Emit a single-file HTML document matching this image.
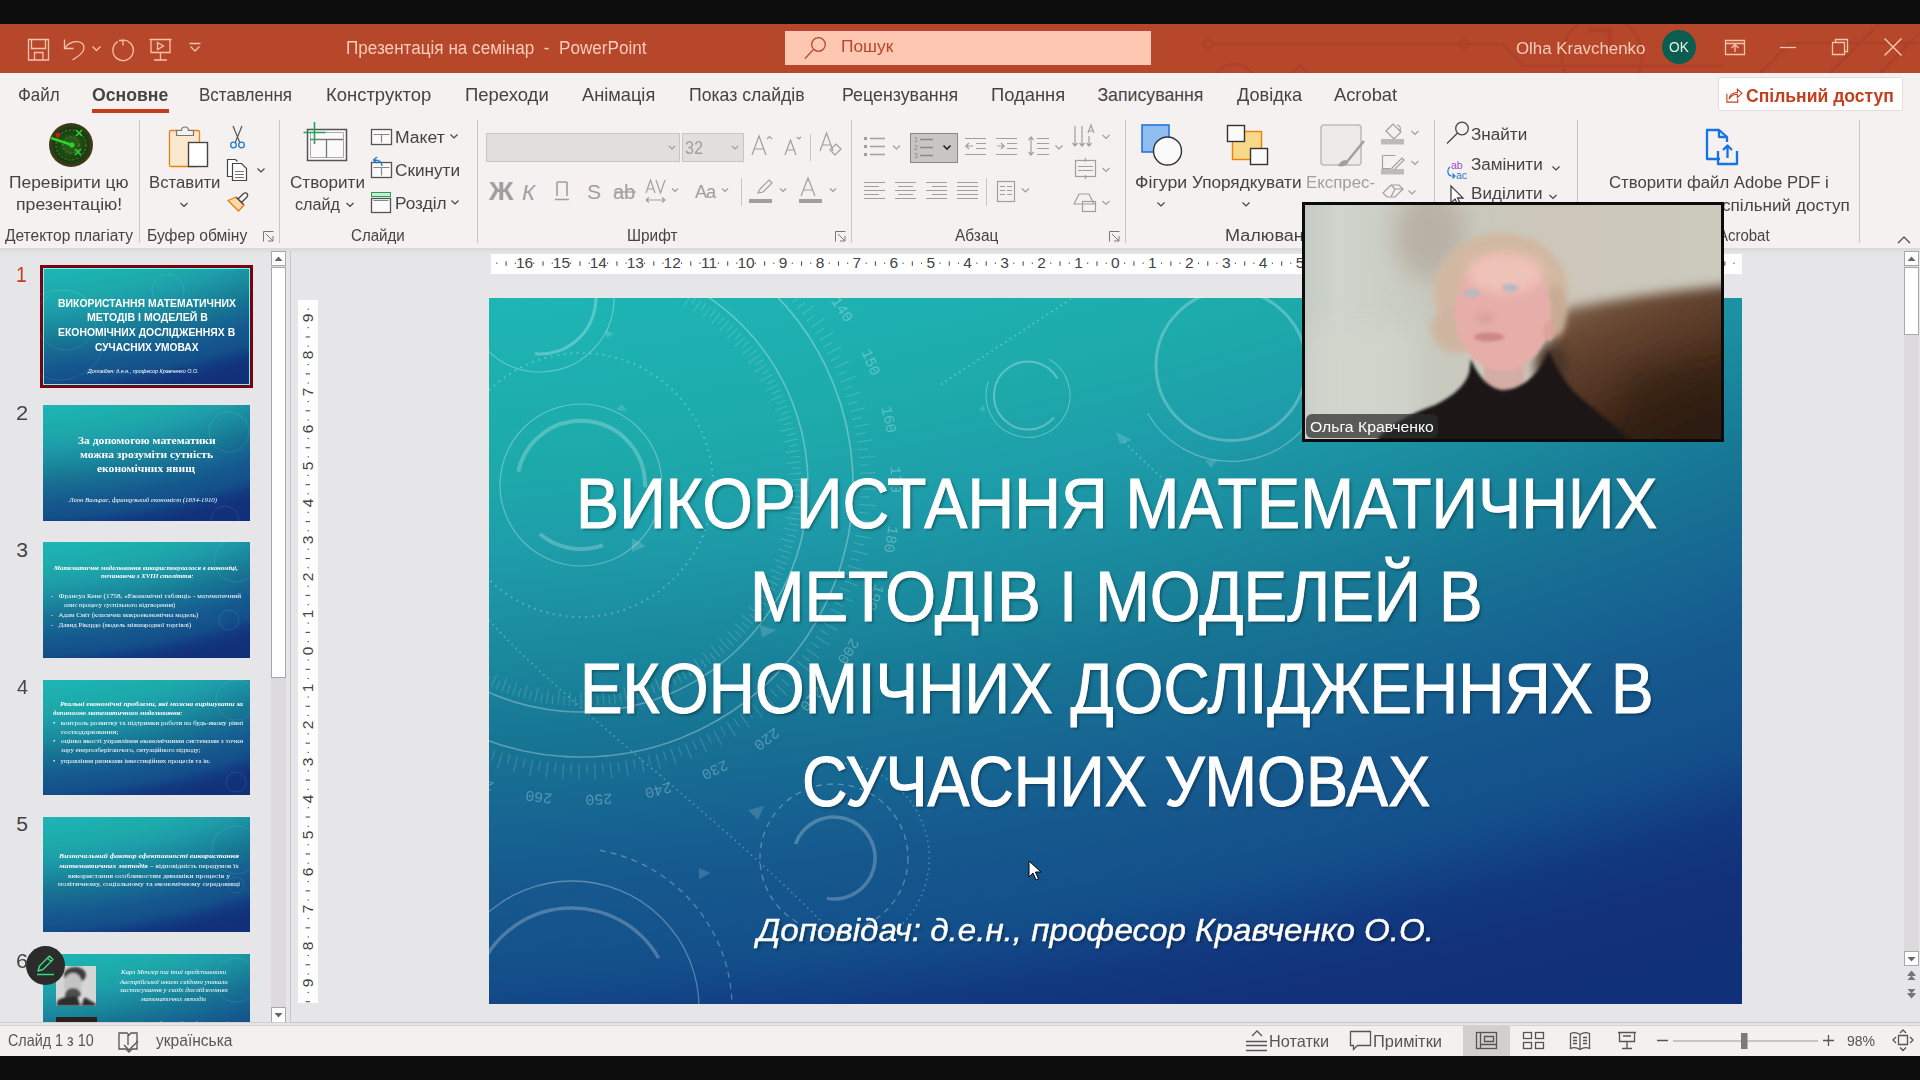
<!DOCTYPE html>
<html><head><meta charset="utf-8">
<style>
*{margin:0;padding:0;box-sizing:border-box}
html,body{width:1920px;height:1080px;overflow:hidden;background:#0c0c0c}
body{position:relative;font-family:"Liberation Sans",sans-serif}
.a{position:absolute}
.t{position:absolute;white-space:nowrap;line-height:1;transform-origin:0 0}
svg{position:absolute;overflow:visible}
</style></head><body>
<div class="a" style="left:0;top:24px;width:1920px;height:49px;background:#b7472a"></div>
<div class="a" style="left:0;top:73px;width:1920px;height:175px;background:#f4f1f0"></div>
<div class="a" style="left:0;top:248px;width:1920px;height:777px;background:#e6e6e8"></div>
<div class="a" style="left:0;top:1025px;width:1920px;height:31px;background:#f3f1f0;border-top:1px solid #d4d2d0"></div>

<svg class="a" style="left:0;top:24px;overflow:hidden" width="1920" height="49" viewBox="0 24 1920 49">
 <g fill="none" stroke="#a63e25" stroke-width="3" opacity="0.55">
  <line x1="1212" y1="44" x2="1460" y2="44"/>
  <circle cx="1208" cy="44" r="4"/><circle cx="1464" cy="44" r="4"/>
  <circle cx="1234" cy="86" r="22"/>
  <path d="M1292 73 l8 -8 l8 8"/>
  <circle cx="1602" cy="56" r="40"/>
  <path d="M1588 30 h22 v22" stroke-width="5"/>
  <path d="M1462 44 h40 l22 22 h200"/>
  <path d="M1760 73 l30 -30 h130"/>
  <path d="M1830 73 l49 -49"/>
  <path d="M1880 73 l40 -40"/>
 </g>
</svg>
<svg class="a" style="left:0;top:24px" width="220" height="49" viewBox="0 24 220 49">
 <g fill="none" stroke="#f6c3ad" stroke-width="1.3">
  <path d="M28.5 39.5 h20 v20.5 h-20 z"/>
  <path d="M31.5 39.5 v9 h14 v-9"/>
  <path d="M34.5 60 v-7.5 h8.5 v7.5"/>
  <path d="M64.5 39.5 v9 h9"/>
  <path d="M65 48 C70 40 84 39 84 48 C84 52 80 55 72.5 60"/>
  <path d="M92.5 46.5 l4 4 l4 -4"/>
  <path d="M122 40.2 A10.2 10.2 0 1 1 118 41.5"/>
  <path d="M119 40.5 h4 v5"/>
  <path d="M149.5 39.5 h22 M151 39.5 v13 h19 v-13 M160.5 52.5 v7.5 M154 60 h13"/>
  <path d="M157.5 42.5 l6 3.5 l-6 3.5 z"/>
  <path d="M189.5 43.5 h11 M190.5 46.5 l4.5 4.5 l4.5 -4.5"/>
 </g>
</svg>
<div class="a" style="left:785px;top:31px;width:366px;height:34px;background:#fdc7b2"></div>
<svg class="a" style="left:800px;top:34px" width="30" height="30" viewBox="0 0 30 30">
 <g fill="none" stroke="#b7472a" stroke-width="1.3"><circle cx="18.5" cy="10.5" r="6.8"/><path d="M13.6 15.4 L5 24.5"/></g>
</svg>
<div class="a" style="left:1662px;top:30px;width:34px;height:34px;border-radius:50%;background:#0b5d4f"></div>
<svg class="a" style="left:1700px;top:24px" width="220" height="49" viewBox="1700 24 220 49">
 <g fill="none" stroke="#f6c3ad" stroke-width="1.3">
  <path d="M1725.5 40.5 h19 v14 h-19 z M1725.5 43.5 h19"/>
  <path d="M1735 52 v-7 M1731.5 48 l3.5 -3.5 l3.5 3.5"/>
  <path d="M1780 47.5 h16"/>
  <path d="M1832.5 42.5 h12 v12 h-12 z M1835.5 42.5 v-3 h12 v12 h-3"/>
  <path d="M1884.5 38.5 l17 17 M1901.5 38.5 l-17 17" stroke-width="1.5"/>
 </g>
</svg>

<div class="t" style="left:345.61px;top:38px;font-size:19.19px;color:#f9cdb9;transform:scaleX(0.8921);white-space:pre">Презентація на семінар  -  PowerPoint</div>
<div class="t" style="left:840.59px;top:39px;font-size:16.72px;color:#b7472a;transform:scaleX(1.0385)">Пошук</div>
<div class="t" style="left:1516.21px;top:40px;font-size:16.35px;color:#f9cdb9;transform:scaleX(1.0324)">Olha Kravchenko</div>
<div class="t" style="left:1669.36px;top:39px;font-size:15.26px;color:#e9f0ea;transform:scaleX(0.8982)">OK</div>
<div class="t" style="left:18.02px;top:87px;font-size:17.73px;color:#444;transform:scaleX(0.9556)">Файл</div>
<div class="t" style="left:199.10px;top:87px;font-size:17.73px;color:#444;transform:scaleX(0.9608)">Вставлення</div>
<div class="t" style="left:326.49px;top:87px;font-size:17.73px;color:#444;transform:scaleX(1.0413)">Конструктор</div>
<div class="t" style="left:464.50px;top:87px;font-size:17.73px;color:#444;transform:scaleX(1.0429)">Переходи</div>
<div class="t" style="left:581.96px;top:87px;font-size:17.73px;color:#444;transform:scaleX(1.0279)">Анімація</div>
<div class="t" style="left:689.07px;top:87px;font-size:17.73px;color:#444;transform:scaleX(0.9959)">Показ слайдів</div>
<div class="t" style="left:842.04px;top:87px;font-size:17.73px;color:#444;transform:scaleX(1.0053)">Рецензування</div>
<div class="t" style="left:991.01px;top:87px;font-size:17.73px;color:#444;transform:scaleX(1.0371)">Подання</div>
<div class="t" style="left:1097.42px;top:87px;font-size:17.73px;color:#444">Записування</div>
<div class="t" style="left:1236.87px;top:87px;font-size:17.73px;color:#444;transform:scaleX(1.0211)">Довідка</div>
<div class="t" style="left:1333.96px;top:87px;font-size:17.73px;color:#444;transform:scaleX(1.0337)">Acrobat</div>
<div class="t" style="left:91.78px;top:87px;font-size:17.73px;color:#444;font-weight:bold;transform:scaleX(0.9954)">Основне</div>
<div class="a" style="left:92px;top:108.5px;width:77px;height:4px;background:#c43e1c"></div>
<div class="a" style="left:1718px;top:77px;width:185px;height:34px;background:#fff;border:1px solid #e1dfdd;border-radius:2px"></div>
<svg class="a" style="left:1724px;top:85px" width="20" height="20" viewBox="0 0 24 22">
 <g fill="none" stroke="#c43e1c" stroke-width="1.3">
  <path d="M3.5 9.5 v10 h13 v-4"/>
  <path d="M6 16 C7 10 11 8 16 8 v-4 l5.5 5 l-5.5 5 v-4 C12 10 8 12 6 16 z"/>
 </g>
</svg>

<div class="t" style="left:1746.28px;top:88px;font-size:17.44px;color:#c43e1c;font-weight:bold;transform:scaleX(1.0063)">Спільний доступ</div>
<svg class="a" style="left:0;top:73px" width="1920" height="175" viewBox="0 73 1920 175">
<defs>
 <radialGradient id="rad" cx="0.5" cy="0.5" r="0.5">
  <stop offset="0" stop-color="#2f6a1e"/><stop offset="0.75" stop-color="#123d10"/><stop offset="1" stop-color="#4a3a1c"/>
 </radialGradient>
</defs>
<g stroke="#c8c6c4" stroke-width="1">
 <line x1="139.5" y1="120" x2="139.5" y2="243"/><line x1="279.5" y1="120" x2="279.5" y2="243"/>
 <line x1="477.5" y1="120" x2="477.5" y2="243"/><line x1="851.5" y1="120" x2="851.5" y2="243"/>
 <line x1="1125.5" y1="120" x2="1125.5" y2="243"/><line x1="1434.5" y1="120" x2="1434.5" y2="243"/>
 <line x1="1577.5" y1="120" x2="1577.5" y2="243"/><line x1="1859.5" y1="120" x2="1859.5" y2="243"/>
 <line x1="810.5" y1="134" x2="810.5" y2="161"/><line x1="741.5" y1="178" x2="741.5" y2="206"/>
 <line x1="986.5" y1="178" x2="986.5" y2="206"/>
</g>
<!-- radar -->
<circle cx="71" cy="145" r="22" fill="url(#rad)"/>
<g fill="none" stroke="#b08a2a" stroke-width="1" stroke-dasharray="2 2" opacity="0.8">
 <circle cx="71" cy="145" r="15"/><circle cx="71" cy="145" r="8"/>
</g>
<path d="M51 138 L72 145" stroke="#2bd62b" stroke-width="2.5"/>
<circle cx="72" cy="145" r="2.5" fill="#2bd62b"/>
<circle cx="58" cy="135" r="2.5" fill="#c0201a"/>
<path d="M76 130 l6 6 M82 130 l-6 6 M75 149 l6 6 M81 149 l-6 6" stroke="#2bd62b" stroke-width="1.5"/>
<!-- clipboard -->
<rect x="169.5" y="130.5" width="30" height="36" rx="1.5" fill="#fbe9cf" stroke="#e8820c" stroke-width="1.3"/>
<path d="M176.5 135.5 v-5 h5 a3.5 3.5 0 0 1 7 0 h5 v5 z" fill="#f3f2f1" stroke="#777" stroke-width="1.2"/>
<rect x="188.5" y="142.5" width="19" height="24" fill="#fff" stroke="#444" stroke-width="1.4"/>
<g fill="none" stroke="#444" stroke-width="1.2">
 <path d="M180.5 203 l3.5 3.5 l3.5 -3.5 M346.5 203 l3.5 3.5 l3.5 -3.5 M1157.5 202.5 l3.5 3.5 l3.5 -3.5 M1242.5 202.5 l3.5 3.5 l3.5 -3.5"/>
 <path d="M257.5 168.5 l3.5 3.5 l3.5 -3.5 M450.5 134.5 l3.5 3.5 l3.5 -3.5 M451.5 200.5 l3.5 3.5 l3.5 -3.5"/>
 <path d="M1552.5 166.5 l3.5 3.5 l3.5 -3.5 M1549.5 195 l3.5 3.5 l3.5 -3.5"/>
</g>
<!-- scissors -->
<path d="M233 126 L240 143 M242 126 L235 143" stroke="#555" stroke-width="1.2" fill="none"/>
<circle cx="233.5" cy="145" r="2.8" fill="none" stroke="#1e7bd3" stroke-width="1.3"/>
<circle cx="241.5" cy="145" r="2.8" fill="none" stroke="#1e7bd3" stroke-width="1.3"/>
<!-- copy -->
<path d="M232.5 176.5 h-5 v-17 h8 l2 2" fill="#fff" stroke="#444" stroke-width="1.2"/>
<path d="M232.5 163.5 h9 l5 5 v12 h-14 z" fill="#fff" stroke="#444" stroke-width="1.2"/>
<path d="M235 171.5 h9 M235 174.5 h9 M235 177.5 h9" stroke="#777" stroke-width="1"/>
<!-- format painter -->
<path d="M228 200.5 L236 197 L244 205 L238.5 211 Z" fill="#fbd8a8" stroke="#e8820c" stroke-width="1.3" stroke-linejoin="round"/>
<path d="M236.5 197.5 L243.5 204.5 M238 199 L243 194 C244 192.5 246 192.5 247 193.5 C248 194.5 248 196.5 246.5 197.5 L241.5 202.5" fill="none" stroke="#444" stroke-width="1.3" stroke-linejoin="round"/>
<!-- launcher icons -->
<g fill="none" stroke="#777" stroke-width="1">
 <path d="M263.5 241.5 v-10 h10 M266 234 l7 7 M273 236 v5 h-5"/>
 <path d="M835.5 241.5 v-10 h10 M838 234 l7 7 M845 236 v5 h-5"/>
 <path d="M1109.5 241.5 v-10 h10 M1112 234 l7 7 M1119 236 v5 h-5"/>
</g>
<!-- new slide -->
<path d="M307.5 129.5 h39 v31 h-39 z" fill="#fafafa" stroke="#555" stroke-width="1.5"/>
<path d="M310.5 132.5 h33 v25 h-33 z" fill="none" stroke="#aaa" stroke-width="1"/>
<path d="M310 139.5 h33 M326.5 139.5 v18" stroke="#777" stroke-width="1.3"/>
<path d="M303.5 132.5 h22 M314.5 122 v22" stroke="#21a35a" stroke-width="1.6"/>
<!-- layout -->
<rect x="371.5" y="129.5" width="20" height="15" fill="#fafafa" stroke="#555" stroke-width="1.3"/>
<path d="M373.5 134.5 h16 M381.5 134.5 v8" stroke="#888" stroke-width="1.2"/>
<rect x="371.5" y="162.5" width="20" height="15" fill="#fafafa" stroke="#555" stroke-width="1.3"/>
<path d="M373.5 167.5 h16 M381.5 167.5 v8" stroke="#888" stroke-width="1.2"/>
<path d="M382 166 c0 -4 -3 -6 -8 -6 M377 157 l-3.5 3 l3.5 3" fill="none" stroke="#1e7bd3" stroke-width="1.3"/>
<rect x="371.5" y="192.5" width="19" height="4" fill="#c9ebd5" stroke="#21a35a" stroke-width="1"/>
<rect x="371.5" y="198.5" width="19" height="14" fill="#fafafa" stroke="#555" stroke-width="1.3"/>
<path d="M373.5 200.5 h15" stroke="#888"/>
<!-- font boxes -->
<rect x="486.5" y="133.5" width="193" height="28" fill="#e1dfdd" stroke="#c8c6c4"/>
<rect x="682.5" y="133.5" width="61" height="28" fill="#e1dfdd" stroke="#c8c6c4"/>
<g fill="none" stroke="#a19f9d" stroke-width="1.2">
 <path d="M669 146 l3 3 l3 -3 M732 146 l3 3 l3 -3"/>
 <path d="M672 188.5 l3 3 l3 -3 M722 188.5 l3 3 l3 -3 M780 188.5 l3 3 l3 -3 M830 188.5 l3 3 l3 -3"/>
 <path d="M893 145.5 l3.5 3.5 l3.5 -3.5 M1055.5 145.5 l3.5 3.5 l3.5 -3.5 M1022 188.5 l3.5 3.5 l3.5 -3.5"/>
 <path d="M1102.5 135 l3.5 3.5 l3.5 -3.5 M1102.5 168 l3.5 3.5 l3.5 -3.5 M1102.5 201 l3.5 3.5 l3.5 -3.5"/>
 <path d="M1411.5 131 l3.5 3.5 l3.5 -3.5 M1411.5 161 l3.5 3.5 l3.5 -3.5 M1408.5 190.5 l3.5 3.5 l3.5 -3.5"/>
 <!-- A^ A v -->
 <path d="M752 155 l7 -19 l7 19 M754.5 149 h9 M767 139 l2.5 -2.5 l2.5 2.5"/>
 <path d="M785 155 l5.5 -15 l5.5 15 M787 150 h7 M797 137 l2 2 l2 -2"/>
 <path d="M820 151 l6.5 -18 l6.5 18 M822.5 145 h8"/>
 <path d="M830 150 l6 -6 l5 5 l-6 6 z" />
 <!-- bullets -->
 <path d="M870 138.5 h15 M870 146.5 h15 M870 154.5 h15" stroke-width="1.5"/>
 <path d="M965 138.5 h21 M976 143.5 h10 M976 148.5 h10 M965 154.5 h21 M973 146 h-7 l3 -3 M966 146 l3 3"/>
 <path d="M996 138.5 h21 M1007 143.5 h10 M1007 148.5 h10 M996 154.5 h21 M997 146 h7 l-3 -3 M1004 146 l-3 3"/>
 <path d="M1037 138.5 h12 M1037 143.5 h12 M1037 148.5 h12 M1037 154.5 h12 M1031 137 v18 M1028.5 140 l2.5 -3 l2.5 3 M1028.5 152 l2.5 3 l2.5 -3"/>
 <!-- align rows -->
 <path d="M864 182.5 h21 M864 186.5 h15 M864 190.5 h21 M864 194.5 h15 M864 198.5 h21"/>
 <path d="M895 182.5 h21 M898 186.5 h15 M895 190.5 h21 M898 194.5 h15 M895 198.5 h21"/>
 <path d="M926 182.5 h21 M932 186.5 h15 M926 190.5 h21 M932 194.5 h15 M926 198.5 h21"/>
 <path d="M957 182.5 h21 M957 186.5 h21 M957 190.5 h21 M957 194.5 h21 M957 198.5 h21"/>
 <rect x="997.5" y="181.5" width="17" height="20"/>
 <path d="M1000 186.5 h5 M1007 186.5 h5 M1000 190.5 h5 M1007 190.5 h5 M1000 194.5 h5 M1007 194.5 h5"/>
 <!-- text direction, align, smartart -->
 <path d="M1075 126 v20 M1082 126 v20 M1089 136 v10 M1072.5 143 l2.5 3 l2.5 -3 M1079.5 143 l2.5 3 l2.5 -3 M1086.5 143 l2.5 3 l2.5 -3 M1088 133 l3 -8 l3 8 M1089 131 h4"/>
 <rect x="1075.5" y="160.5" width="20" height="16"/>
 <path d="M1078 166.5 h15 M1078 170.5 h15 M1085.5 158 v4 M1085.5 175 v4"/>
 <path d="M1074 204 l5 -10 h10 l5 10 z"/>
 <rect x="1082.5" y="201.5" width="13" height="10"/>
 <!-- font row 2 -->
 <path d="M555 199.5 h14 M557 182 v14 M567 182 v14 M557 182 h10" stroke-width="1.6"/>
 <path d="M614 192 h22" stroke-width="1.2"/>
 <path d="M646 193 l4.5 -13 l4.5 13 M647.5 189 h6 M656 180 l4.5 13 l4.5 -13 M646 200 h19 M646 200 l3 -2.5 M646 200 l3 2.5 M665 200 l-3 -2.5 M665 200 l-3 2.5"/>
 
 <path d="M760 189 l9 -9 l3 3 l-9 9 l-5 1 z"/>
 <path d="M801 196 l7 -18 l7 18 M803.5 190 h9"/>
 <!-- select -->
</g>
<g fill="#a19f9d">
 <rect x="749" y="199" width="23" height="4"/><rect x="799" y="199" width="23" height="4"/>
 <rect x="864" y="137" width="3" height="3"/><rect x="864" y="145" width="3" height="3"/><rect x="864" y="153" width="3" height="3"/>
</g>
<text x="489" y="200" font-family="Liberation Sans" font-weight="bold" font-size="25" fill="#a19f9d" transform="translate(489 0) scale(1.08 1) translate(-489 0)">Ж</text>
<text x="522" y="200" font-family="Liberation Sans" font-style="italic" font-size="22" fill="#a19f9d">К</text>
<text x="587" y="199" font-family="Liberation Sans" font-size="21" fill="#a19f9d">S</text>
<text x="613" y="199" font-family="Liberation Sans" font-size="20" fill="#a19f9d">ab</text>
<text x="695" y="198" font-family="Liberation Sans" font-size="18" fill="#a19f9d" textLength="21">Aa</text>
<!-- numbering box -->
<rect x="910.5" y="133.5" width="47" height="29" fill="#c8c6c4" stroke="#8a8886"/>
<path d="M920 139.5 h13 M920 147.5 h13 M920 155.5 h13" stroke="#8a8886" stroke-width="1.5"/>
<text x="914" y="142" font-family="Liberation Sans" font-size="7" fill="#8a8886">1</text>
<text x="914" y="150" font-family="Liberation Sans" font-size="7" fill="#8a8886">2</text>
<text x="914" y="158" font-family="Liberation Sans" font-size="7" fill="#8a8886">3</text>
<path d="M943.5 145.5 l3.5 3.5 l3.5 -3.5" fill="none" stroke="#222" stroke-width="1.6"/>
<!-- shapes -->
<rect x="1142" y="125" width="27" height="27" fill="#8fbdf0" stroke="#1e6fd9" stroke-width="1.5"/>
<circle cx="1167.5" cy="151" r="14" fill="#fafafa" stroke="#333" stroke-width="1.4"/>
<!-- arrange -->
<rect x="1232.5" y="131.5" width="29" height="28" fill="#f8d98a" stroke="#e8820c" stroke-width="1.4"/>
<rect x="1227.5" y="125.5" width="17" height="16" fill="#fafafa" stroke="#333" stroke-width="1.4"/>
<rect x="1250.5" y="148.5" width="17" height="16" fill="#fafafa" stroke="#333" stroke-width="1.4"/>
<!-- express -->
<rect x="1321" y="125" width="40" height="40" rx="3" fill="#ecebea" stroke="#bdbbb9" stroke-width="1.5"/>
<path d="M1364 141 l-18 22" stroke="#a19f9d" stroke-width="2.5"/>
<path d="M1346 160 c-4 0 -7 3 -8 6 c4 1 8 0 10 -3 z" fill="#a19f9d"/>
<!-- fill, outline, effects -->
<g fill="none" stroke="#a19f9d" stroke-width="1.2">
 <path d="M1386 131 l7 -7 l8 8 l-7 7 z M1397 125 c3 0 4 3 3 6"/>
 <path d="M1382.5 155.5 h13 M1382.5 155.5 v13 h8 M1392 168 l10 -10 l2 2 l-10 10 l-3 1 z"/>
 <path d="M1383 193 l8 -8 h8 l4 4 l-8 8 h-8 z M1391 185 l4 4 l8 0 M1395 189 l-4 8"/>
</g>
<g fill="#bdbbb9"><rect x="1381" y="139" width="23" height="5.5"/><rect x="1381" y="169" width="23" height="5.5"/></g>
<!-- find replace select -->
<g fill="none" stroke="#444" stroke-width="1.3">
 <circle cx="1462" cy="128.5" r="6.3"/><path d="M1457.5 133 L1447 143.5"/>
 <path d="M1451 186 v17 l4 -4 l3 6 l2.5 -1 l-3 -6 h5.5 z" fill="#fff"/>
</g>
<text x="1451" y="169" font-family="Liberation Sans" font-size="10.5" fill="#9b4fc2">ab</text>
<text x="1456" y="179" font-family="Liberation Sans" font-size="10.5" fill="#1e7bd3">ac</text>
<path d="M1450 167 c-3 2 -3 8 1 9 h4 M1452.5 173.5 l2.5 2.5 l-2.5 2.5" fill="none" stroke="#1e7bd3" stroke-width="1.1"/>
<!-- adobe -->
<g fill="none" stroke="#1473e6" stroke-width="2.3" stroke-linejoin="round">
 <path d="M1720 159 h-13 v-29 h12 l8 7 v5"/>
 <path d="M1719 130 v7 h8"/>
 <path d="M1718 151 v13 h19 v-13 M1727.5 158 v-12 M1723 150 l4.5 -4.5 l4.5 4.5"/>
</g>
<path d="M1898 243 l6 -6 l6 6" fill="none" stroke="#444" stroke-width="1.2"/>
</svg>

<div class="t" style="left:9.09px;top:174px;font-size:16.42px;color:#444;transform:scaleX(1.0598)">Перевірити цю</div>
<div class="t" style="left:148.63px;top:174px;font-size:16.42px;color:#444;transform:scaleX(1.0184)">Вставити</div>
<div class="t" style="left:289.63px;top:174px;font-size:16.42px;color:#444;transform:scaleX(1.0416)">Створити</div>
<div class="t" style="left:1134.97px;top:174px;font-size:16.42px;color:#444;transform:scaleX(1.0784)">Фігури</div>
<div class="t" style="left:1191.54px;top:174px;font-size:16.42px;color:#444;transform:scaleX(1.0469)">Упорядкувати</div>
<div class="t" style="left:1609.15px;top:174px;font-size:16.42px;color:#444;transform:scaleX(1.0197)">Створити файл Adobe PDF і</div>
<div class="t" style="left:1305.62px;top:174px;font-size:16.42px;color:#a19f9d;transform:scaleX(1.0257)">Експрес-</div>
<div class="t" style="left:16.28px;top:196px;font-size:16.42px;color:#444;transform:scaleX(1.0766)">презентацію!</div>
<div class="t" style="left:295.32px;top:196px;font-size:16.42px;color:#444;transform:scaleX(0.9838)">слайд</div>
<div class="t" style="left:394.56px;top:129px;font-size:16.42px;color:#444;transform:scaleX(1.0701)">Макет</div>
<div class="t" style="left:395.12px;top:162px;font-size:16.42px;color:#444;transform:scaleX(1.0460)">Скинути</div>
<div class="t" style="left:394.59px;top:195px;font-size:16.42px;color:#444;transform:scaleX(1.0497)">Розділ</div>
<div class="t" style="left:1471.44px;top:126px;font-size:16.42px;color:#444;transform:scaleX(1.0418)">Знайти</div>
<div class="t" style="left:1471.44px;top:156px;font-size:16.42px;color:#444;transform:scaleX(1.0408)">Замінити</div>
<div class="t" style="left:1470.60px;top:185px;font-size:16.42px;color:#444;transform:scaleX(1.0404)">Виділити</div>
<div class="t" style="left:1721.78px;top:197px;font-size:16.42px;color:#444;transform:scaleX(1.0440)">спільний доступ</div>
<div class="t" style="left:4.89px;top:227px;font-size:16.42px;color:#444;transform:scaleX(0.9445)">Детектор плагіату</div>
<div class="t" style="left:146.72px;top:227px;font-size:16.42px;color:#444;transform:scaleX(0.9536)">Буфер обміну</div>
<div class="t" style="left:351.23px;top:227px;font-size:16.42px;color:#444;transform:scaleX(0.9198)">Слайди</div>
<div class="t" style="left:626.74px;top:227px;font-size:16.42px;color:#444;transform:scaleX(0.9349)">Шрифт</div>
<div class="t" style="left:954.97px;top:227px;font-size:16.42px;color:#444;transform:scaleX(0.9417)">Абзац</div>
<div class="t" style="left:1224.52px;top:227px;font-size:16.42px;color:#444;transform:scaleX(1.1018)">Малювання</div>
<div class="t" style="left:1717.97px;top:227px;font-size:16.42px;color:#444;transform:scaleX(0.9123)">Acrobat</div>
<div class="t" style="left:685.38px;top:140px;font-size:17.88px;color:#a19f9d;transform:scaleX(0.9068)">32</div>
<div class="a" style="left:0;top:248px;width:1920px;height:6px;background:linear-gradient(#d9d8d7,#e6e6e8)"></div>
<!-- left scrollbar -->
<div class="a" style="left:271px;top:251px;width:15px;height:772px;background:#dcdadc"></div>
<div class="a" style="left:271px;top:251px;width:15px;height:15px;background:#fff;border:1px solid #a8a8a8"></div>
<div class="a" style="left:271px;top:267px;width:15px;height:411px;background:#fff;border:1px solid #a8a8a8"></div>
<div class="a" style="left:271px;top:1007px;width:15px;height:16px;background:#fff;border:1px solid #a8a8a8"></div>
<svg class="a" style="left:271px;top:251px" width="15" height="775" viewBox="0 0 15 775">
 <path d="M3.5 10 l4 -4.5 l4 4.5 z" fill="#666"/>
 <path d="M3.5 762 l4 4.5 l4 -4.5 z" fill="#666"/>
</svg>
<div class="a" style="left:290px;top:251px;width:1px;height:772px;background:#c8c8c8"></div>
<div class="a" style="left:0;top:1022px;width:291px;height:1px;background:#cfcfcf"></div>
<!-- thumb 1 border -->
<div class="a" style="left:40px;top:265px;width:213px;height:123px;background:#7d0011"></div>
<div class="a" style="left:43px;top:268px;width:207px;height:117px;background:#66fff0"></div>

<style>.thumb{background:radial-gradient(ellipse 664px 398px at -50px -199px,#1eb5b5 50.6%,#1da9aa 57.8%,#1e9daa 61%,#1a8a9e 65.2%,#177594 68.9%,#166492 72.5%,#16598e 74.9%,#134f8a 78.8%,#123a81 81.2%,#12317a 83.6%,#11307a 87.3%)}</style>
<div class="a thumb" style="left:44px;top:269px;width:205px;height:115px"></div>
<div class="a thumb" style="left:43px;top:405px;width:207px;height:116px"></div>
<div class="a thumb" style="left:43px;top:542px;width:207px;height:116px"></div>
<div class="a thumb" style="left:43px;top:680px;width:207px;height:115px"></div>
<div class="a thumb" style="left:43px;top:817px;width:207px;height:115px"></div>
<div class="a thumb" style="left:43px;top:954px;width:207px;height:68px"></div>
<svg class="a" style="left:0;top:250px;overflow:hidden" width="290" height="772" viewBox="0 250 290 772">
 <g fill="none" stroke="#bff" stroke-width="0.8" opacity="0.13">
  <circle cx="66" cy="320" r="30"/><circle cx="168" cy="290" r="16"/><circle cx="60" cy="335" r="45"/>
  <circle cx="229" cy="432" r="20"/><circle cx="225" cy="520" r="14"/>
  <circle cx="236" cy="560" r="22"/><circle cx="229" cy="620" r="10"/>
  <circle cx="236" cy="700" r="20"/><circle cx="236" cy="782" r="10"/>
  <circle cx="236" cy="850" r="24"/><circle cx="236" cy="885" r="8"/>
  <circle cx="236" cy="980" r="22"/>
 </g>
</svg>
<!-- thumb 6 photos -->
<svg class="a" style="left:56px;top:966px;overflow:hidden" width="40" height="40" viewBox="0 0 40 40">
 <defs><filter id="pb" x="-20%" y="-20%" width="140%" height="140%"><feGaussianBlur stdDeviation="0.9"/></filter></defs>
 <rect width="40" height="40" fill="#d6d6d6"/>
 <g filter="url(#pb)">
 <ellipse cx="19" cy="9" rx="11" ry="8" fill="#3c3c3c"/>
 <ellipse cx="17" cy="18" rx="9" ry="11" fill="#c4c4c4"/>
 <ellipse cx="17" cy="29" rx="8" ry="7" fill="#505050"/>
 <path d="M0 40 L2 34 C8 30 20 29 30 32 L40 38 L40 40 Z" fill="#2e2e2e"/>
 <path d="M22 31 L28 30 L25 40 Z" fill="#e0e0e0"/>
 </g>
</svg>
<div class="a" style="left:56px;top:1017px;width:41px;height:5px;background:#2b211c"></div>
<!-- pen button -->
<div class="a" style="left:26px;top:946px;width:39px;height:39px;border-radius:50%;background:#2b2b2b"></div>
<svg class="a" style="left:26px;top:946px" width="39" height="39" viewBox="0 0 39 39">
 <g fill="none" stroke="#3bd67f" stroke-width="1.5" stroke-linejoin="round">
  <path d="M12 25 l1.5 -5 l10 -10 l3.5 3.5 l-10 10 z M21.5 12 l3.5 3.5"/>
  <path d="M11 28.5 h17"/>
 </g>
</svg>

<div class="t" style="left:16.04px;top:264px;font-size:21.80px;color:#c43e1c;transform:scaleX(0.8833)">1</div>
<div class="t" style="left:15.90px;top:402px;font-size:21.08px;color:#444;transform:scaleX(1.0405)">2</div>
<div class="t" style="left:16.20px;top:539px;font-size:21.08px;color:#444">3</div>
<div class="t" style="left:16.54px;top:676px;font-size:21.08px;color:#444;transform:scaleX(0.9414)">4</div>
<div class="t" style="left:16.16px;top:813px;font-size:21.08px;color:#444">5</div>
<div class="t" style="left:15.89px;top:950px;font-size:21.08px;color:#444;transform:scaleX(1.0292)">6</div>
<div class="t" style="left:57.80px;top:298px;font-size:11.05px;color:#ffffff;font-weight:bold;transform:scaleX(0.9444)">ВИКОРИСТАННЯ МАТЕМАТИЧНИХ</div>
<div class="t" style="left:86.79px;top:312px;font-size:11.05px;color:#ffffff;font-weight:bold;transform:scaleX(0.9548)">МЕТОДІВ І МОДЕЛЕЙ В</div>
<div class="t" style="left:58.30px;top:327px;font-size:11.05px;color:#ffffff;font-weight:bold;transform:scaleX(0.9415)">ЕКОНОМІЧНИХ ДОСЛІДЖЕННЯХ В</div>
<div class="t" style="left:95.18px;top:342px;font-size:11.05px;color:#ffffff;font-weight:bold;transform:scaleX(0.9247)">СУЧАСНИХ УМОВАХ</div>
<div class="t" style="left:88.00px;top:368px;font-size:6.00px;color:#ffffff;font-style:italic;transform:scaleX(0.9029)">Доповідач: д.е.н., професор Кравченко О.О.</div>
<div class="t" style="left:78.17px;top:437px;font-size:9.50px;color:#ffffff;font-weight:bold;font-family:'Liberation Serif',serif;transform:scaleX(1.2170)">За допомогою математики</div>
<div class="t" style="left:80.20px;top:451px;font-size:9.50px;color:#ffffff;font-weight:bold;font-family:'Liberation Serif',serif;transform:scaleX(1.2144)">можна зрозуміти сутність</div>
<div class="t" style="left:97.11px;top:465px;font-size:9.50px;color:#ffffff;font-weight:bold;font-family:'Liberation Serif',serif;transform:scaleX(1.2146)">економічних явищ</div>
<div class="t" style="left:68.78px;top:497px;font-size:7.00px;color:#ffffff;font-style:italic;font-family:'Liberation Serif',serif;transform:scaleX(0.9768)">Леон Вальрас, французький економіст (1834-1910)</div>
<div class="t" style="left:54.09px;top:565px;font-size:6.50px;color:#ffffff;font-weight:bold;font-style:italic;font-family:'Liberation Serif',serif;transform:scaleX(1.0498)">Математичне моделювання використовувалося в економіці,</div>
<div class="t" style="left:100.86px;top:573px;font-size:6.50px;color:#ffffff;font-weight:bold;font-style:italic;font-family:'Liberation Serif',serif;transform:scaleX(1.0556)">починаючи з XVIII століття:</div>
<div class="t" style="left:50.73px;top:593px;font-size:6.20px;color:#ffffff;font-family:'Liberation Serif',serif;transform:scaleX(1.1704);white-space:pre">-   Франсуа Кене (1758, «Економічні таблиці» - математичний</div>
<div class="t" style="left:63.75px;top:602px;font-size:6.20px;color:#ffffff;font-family:'Liberation Serif',serif;transform:scaleX(1.0731);white-space:pre">опис процесу суспільного відтворення)</div>
<div class="t" style="left:50.74px;top:612px;font-size:6.20px;color:#ffffff;font-family:'Liberation Serif',serif;transform:scaleX(1.1159);white-space:pre">-   Адам Сміт (класична макроекономічна модель)</div>
<div class="t" style="left:50.74px;top:622px;font-size:6.20px;color:#ffffff;font-family:'Liberation Serif',serif;transform:scaleX(1.1131);white-space:pre">-   Давид Рікардо (модель міжнародної торгівлі)</div>
<div class="t" style="left:60.01px;top:701px;font-size:6.30px;color:#ffffff;font-weight:bold;font-style:italic;font-family:'Liberation Serif',serif;transform:scaleX(1.1770)">Реальні економічні проблеми, які можна вирішувати за</div>
<div class="t" style="left:52.88px;top:710px;font-size:6.30px;color:#ffffff;font-weight:bold;font-style:italic;font-family:'Liberation Serif',serif;transform:scaleX(1.0904)">допомогою математичного моделювання:</div>
<div class="t" style="left:52.60px;top:720px;font-size:6.20px;color:#ffffff;font-family:'Liberation Serif',serif;transform:scaleX(1.1553);white-space:pre">•   контроль розвитку та підтримки роботи на будь-якому рівні</div>
<div class="t" style="left:60.86px;top:729px;font-size:6.20px;color:#ffffff;font-family:'Liberation Serif',serif;transform:scaleX(1.2812);white-space:pre">господарювання;</div>
<div class="t" style="left:52.59px;top:738px;font-size:6.20px;color:#ffffff;font-family:'Liberation Serif',serif;transform:scaleX(1.1781);white-space:pre">•   оцінка якості управління економічними системами з точки</div>
<div class="t" style="left:60.81px;top:747px;font-size:6.20px;color:#ffffff;font-family:'Liberation Serif',serif;transform:scaleX(1.1059);white-space:pre">зору енергозберігаючого, ситуаційного підходу;</div>
<div class="t" style="left:52.61px;top:758px;font-size:6.20px;color:#ffffff;font-family:'Liberation Serif',serif;transform:scaleX(1.1110);white-space:pre">•   управління ризиками інвестиційних процесів та ін.</div>
<div class="t" style="left:59.07px;top:853px;font-size:6.80px;color:#ffffff;font-weight:bold;font-style:italic;font-family:'Liberation Serif',serif;transform:scaleX(1.1360)">Визначальний фактор ефективності використання</div>
<div class="t" style="left:59.28px;top:863px;font-size:6.80px;color:#ffffff;font-weight:bold;font-style:italic;font-family:'Liberation Serif',serif;transform:scaleX(1.2032)">математичних методів</div>
<div class="t" style="left:150.05px;top:863px;font-size:6.80px;color:#ffffff;font-family:'Liberation Serif',serif;transform:scaleX(1.0696)">– відповідність передумов їх</div>
<div class="t" style="left:67.86px;top:873px;font-size:6.80px;color:#ffffff;font-family:'Liberation Serif',serif;transform:scaleX(1.1373)">використання особливостям динаміки процесів у</div>
<div class="t" style="left:57.86px;top:881px;font-size:6.80px;color:#ffffff;font-family:'Liberation Serif',serif;transform:scaleX(1.1343)">політичному, соціальному та економічному середовищі</div>
<div class="t" style="left:121.08px;top:969px;font-size:6.80px;color:#ffffff;font-style:italic;font-family:'Liberation Serif',serif;transform:scaleX(1.0177)">Карл Менгер та інші представники</div>
<div class="t" style="left:120.38px;top:979px;font-size:6.80px;color:#ffffff;font-style:italic;font-family:'Liberation Serif',serif;transform:scaleX(1.0229)">Австрійської школи свідомо уникали</div>
<div class="t" style="left:120.09px;top:987px;font-size:6.80px;color:#ffffff;font-style:italic;font-family:'Liberation Serif',serif;transform:scaleX(1.0561)">застосування у своїх дослідженнях</div>
<div class="t" style="left:141.18px;top:996px;font-size:6.80px;color:#ffffff;font-style:italic;font-family:'Liberation Serif',serif;transform:scaleX(0.9268)">математичних методів</div>
<div class="a" style="left:0;top:1012px;width:270px;height:10px;overflow:hidden"><div class="a" style="left:0;top:-1012px;width:270px;height:1100px"><div class="t" style="left:125.08px;top:1021px;font-size:7.00px;color:#ffffff;font-style:italic;font-family:'Liberation Serif',serif;transform:scaleX(0.9675)">Мілтон Фрідмен – досвід і уявлений</div></div></div>
<div class="a" style="left:491px;top:254px;width:1251px;height:20px;background:#fff"></div>
<div class="a" style="left:298px;top:300px;width:20px;height:703px;background:#fff"></div>
<div class="t" style="left:514.52px;top:255px;width:20px;text-align:center;font-size:15.5px;color:#444">16</div>
<div class="t" style="left:551.45px;top:255px;width:20px;text-align:center;font-size:15.5px;color:#444">15</div>
<div class="t" style="left:588.38px;top:255px;width:20px;text-align:center;font-size:15.5px;color:#444">14</div>
<div class="t" style="left:625.31px;top:255px;width:20px;text-align:center;font-size:15.5px;color:#444">13</div>
<div class="t" style="left:662.24px;top:255px;width:20px;text-align:center;font-size:15.5px;color:#444">12</div>
<div class="t" style="left:699.17px;top:255px;width:20px;text-align:center;font-size:15.5px;color:#444">11</div>
<div class="t" style="left:736.10px;top:255px;width:20px;text-align:center;font-size:15.5px;color:#444">10</div>
<div class="t" style="left:773.03px;top:255px;width:20px;text-align:center;font-size:15.5px;color:#444">9</div>
<div class="t" style="left:298px;top:310.43px;width:20px;text-align:center;font-size:15.5px;color:#444;transform:rotate(-90deg);transform-origin:10px 8px">9</div>
<div class="t" style="left:809.96px;top:255px;width:20px;text-align:center;font-size:15.5px;color:#444">8</div>
<div class="t" style="left:298px;top:347.36px;width:20px;text-align:center;font-size:15.5px;color:#444;transform:rotate(-90deg);transform-origin:10px 8px">8</div>
<div class="t" style="left:846.89px;top:255px;width:20px;text-align:center;font-size:15.5px;color:#444">7</div>
<div class="t" style="left:298px;top:384.29px;width:20px;text-align:center;font-size:15.5px;color:#444;transform:rotate(-90deg);transform-origin:10px 8px">7</div>
<div class="t" style="left:883.82px;top:255px;width:20px;text-align:center;font-size:15.5px;color:#444">6</div>
<div class="t" style="left:298px;top:421.22px;width:20px;text-align:center;font-size:15.5px;color:#444;transform:rotate(-90deg);transform-origin:10px 8px">6</div>
<div class="t" style="left:920.75px;top:255px;width:20px;text-align:center;font-size:15.5px;color:#444">5</div>
<div class="t" style="left:298px;top:458.15px;width:20px;text-align:center;font-size:15.5px;color:#444;transform:rotate(-90deg);transform-origin:10px 8px">5</div>
<div class="t" style="left:957.68px;top:255px;width:20px;text-align:center;font-size:15.5px;color:#444">4</div>
<div class="t" style="left:298px;top:495.08px;width:20px;text-align:center;font-size:15.5px;color:#444;transform:rotate(-90deg);transform-origin:10px 8px">4</div>
<div class="t" style="left:994.61px;top:255px;width:20px;text-align:center;font-size:15.5px;color:#444">3</div>
<div class="t" style="left:298px;top:532.01px;width:20px;text-align:center;font-size:15.5px;color:#444;transform:rotate(-90deg);transform-origin:10px 8px">3</div>
<div class="t" style="left:1031.54px;top:255px;width:20px;text-align:center;font-size:15.5px;color:#444">2</div>
<div class="t" style="left:298px;top:568.94px;width:20px;text-align:center;font-size:15.5px;color:#444;transform:rotate(-90deg);transform-origin:10px 8px">2</div>
<div class="t" style="left:1068.47px;top:255px;width:20px;text-align:center;font-size:15.5px;color:#444">1</div>
<div class="t" style="left:298px;top:605.87px;width:20px;text-align:center;font-size:15.5px;color:#444;transform:rotate(-90deg);transform-origin:10px 8px">1</div>
<div class="t" style="left:1105.40px;top:255px;width:20px;text-align:center;font-size:15.5px;color:#444">0</div>
<div class="t" style="left:298px;top:642.80px;width:20px;text-align:center;font-size:15.5px;color:#444;transform:rotate(-90deg);transform-origin:10px 8px">0</div>
<div class="t" style="left:1142.33px;top:255px;width:20px;text-align:center;font-size:15.5px;color:#444">1</div>
<div class="t" style="left:298px;top:679.73px;width:20px;text-align:center;font-size:15.5px;color:#444;transform:rotate(-90deg);transform-origin:10px 8px">1</div>
<div class="t" style="left:1179.26px;top:255px;width:20px;text-align:center;font-size:15.5px;color:#444">2</div>
<div class="t" style="left:298px;top:716.66px;width:20px;text-align:center;font-size:15.5px;color:#444;transform:rotate(-90deg);transform-origin:10px 8px">2</div>
<div class="t" style="left:1216.19px;top:255px;width:20px;text-align:center;font-size:15.5px;color:#444">3</div>
<div class="t" style="left:298px;top:753.59px;width:20px;text-align:center;font-size:15.5px;color:#444;transform:rotate(-90deg);transform-origin:10px 8px">3</div>
<div class="t" style="left:1253.12px;top:255px;width:20px;text-align:center;font-size:15.5px;color:#444">4</div>
<div class="t" style="left:298px;top:790.52px;width:20px;text-align:center;font-size:15.5px;color:#444;transform:rotate(-90deg);transform-origin:10px 8px">4</div>
<div class="t" style="left:1290.05px;top:255px;width:20px;text-align:center;font-size:15.5px;color:#444">5</div>
<div class="t" style="left:298px;top:827.45px;width:20px;text-align:center;font-size:15.5px;color:#444;transform:rotate(-90deg);transform-origin:10px 8px">5</div>
<div class="t" style="left:1326.98px;top:255px;width:20px;text-align:center;font-size:15.5px;color:#444">6</div>
<div class="t" style="left:298px;top:864.38px;width:20px;text-align:center;font-size:15.5px;color:#444;transform:rotate(-90deg);transform-origin:10px 8px">6</div>
<div class="t" style="left:1363.91px;top:255px;width:20px;text-align:center;font-size:15.5px;color:#444">7</div>
<div class="t" style="left:298px;top:901.31px;width:20px;text-align:center;font-size:15.5px;color:#444;transform:rotate(-90deg);transform-origin:10px 8px">7</div>
<div class="t" style="left:1400.84px;top:255px;width:20px;text-align:center;font-size:15.5px;color:#444">8</div>
<div class="t" style="left:298px;top:938.24px;width:20px;text-align:center;font-size:15.5px;color:#444;transform:rotate(-90deg);transform-origin:10px 8px">8</div>
<div class="t" style="left:1437.77px;top:255px;width:20px;text-align:center;font-size:15.5px;color:#444">9</div>
<div class="t" style="left:298px;top:975.17px;width:20px;text-align:center;font-size:15.5px;color:#444;transform:rotate(-90deg);transform-origin:10px 8px">9</div>
<div class="t" style="left:1474.70px;top:255px;width:20px;text-align:center;font-size:15.5px;color:#444">10</div>
<div class="t" style="left:1511.63px;top:255px;width:20px;text-align:center;font-size:15.5px;color:#444">11</div>
<div class="t" style="left:1548.56px;top:255px;width:20px;text-align:center;font-size:15.5px;color:#444">12</div>
<div class="t" style="left:1585.49px;top:255px;width:20px;text-align:center;font-size:15.5px;color:#444">13</div>
<div class="t" style="left:1622.42px;top:255px;width:20px;text-align:center;font-size:15.5px;color:#444">14</div>
<div class="t" style="left:1659.35px;top:255px;width:20px;text-align:center;font-size:15.5px;color:#444">15</div>
<div class="t" style="left:1696.28px;top:255px;width:20px;text-align:center;font-size:15.5px;color:#444">16</div>
<svg class="a" style="left:0;top:0" width="1920" height="1080" viewBox="0 0 1920 1080"><g fill="#555"><rect x="496.32" y="262.5" width="1" height="1.5"/><rect x="505.56" y="261.3" width="1.1" height="4.5"/><rect x="514.79" y="262.5" width="1" height="1.5"/><rect x="533.25" y="262.5" width="1" height="1.5"/><rect x="542.49" y="261.3" width="1.1" height="4.5"/><rect x="551.72" y="262.5" width="1" height="1.5"/><rect x="570.18" y="262.5" width="1" height="1.5"/><rect x="579.42" y="261.3" width="1.1" height="4.5"/><rect x="588.65" y="262.5" width="1" height="1.5"/><rect x="607.11" y="262.5" width="1" height="1.5"/><rect x="616.35" y="261.3" width="1.1" height="4.5"/><rect x="625.58" y="262.5" width="1" height="1.5"/><rect x="644.04" y="262.5" width="1" height="1.5"/><rect x="653.28" y="261.3" width="1.1" height="4.5"/><rect x="662.51" y="262.5" width="1" height="1.5"/><rect x="680.97" y="262.5" width="1" height="1.5"/><rect x="690.21" y="261.3" width="1.1" height="4.5"/><rect x="699.44" y="262.5" width="1" height="1.5"/><rect x="717.90" y="262.5" width="1" height="1.5"/><rect x="727.14" y="261.3" width="1.1" height="4.5"/><rect x="736.37" y="262.5" width="1" height="1.5"/><rect x="754.83" y="262.5" width="1" height="1.5"/><rect x="764.07" y="261.3" width="1.1" height="4.5"/><rect x="773.30" y="262.5" width="1" height="1.5"/><rect x="307.5" y="308.70" width="1.5" height="1"/><rect x="791.76" y="262.5" width="1" height="1.5"/><rect x="801.00" y="261.3" width="1.1" height="4.5"/><rect x="810.23" y="262.5" width="1" height="1.5"/><rect x="307.5" y="327.16" width="1.5" height="1"/><rect x="305.5" y="336.39" width="4.5" height="1.1"/><rect x="307.5" y="345.63" width="1.5" height="1"/><rect x="828.69" y="262.5" width="1" height="1.5"/><rect x="837.93" y="261.3" width="1.1" height="4.5"/><rect x="847.16" y="262.5" width="1" height="1.5"/><rect x="307.5" y="364.09" width="1.5" height="1"/><rect x="305.5" y="373.32" width="4.5" height="1.1"/><rect x="307.5" y="382.56" width="1.5" height="1"/><rect x="865.62" y="262.5" width="1" height="1.5"/><rect x="874.86" y="261.3" width="1.1" height="4.5"/><rect x="884.09" y="262.5" width="1" height="1.5"/><rect x="307.5" y="401.02" width="1.5" height="1"/><rect x="305.5" y="410.25" width="4.5" height="1.1"/><rect x="307.5" y="419.49" width="1.5" height="1"/><rect x="902.55" y="262.5" width="1" height="1.5"/><rect x="911.79" y="261.3" width="1.1" height="4.5"/><rect x="921.02" y="262.5" width="1" height="1.5"/><rect x="307.5" y="437.95" width="1.5" height="1"/><rect x="305.5" y="447.18" width="4.5" height="1.1"/><rect x="307.5" y="456.42" width="1.5" height="1"/><rect x="939.48" y="262.5" width="1" height="1.5"/><rect x="948.72" y="261.3" width="1.1" height="4.5"/><rect x="957.95" y="262.5" width="1" height="1.5"/><rect x="307.5" y="474.88" width="1.5" height="1"/><rect x="305.5" y="484.11" width="4.5" height="1.1"/><rect x="307.5" y="493.35" width="1.5" height="1"/><rect x="976.41" y="262.5" width="1" height="1.5"/><rect x="985.65" y="261.3" width="1.1" height="4.5"/><rect x="994.88" y="262.5" width="1" height="1.5"/><rect x="307.5" y="511.81" width="1.5" height="1"/><rect x="305.5" y="521.04" width="4.5" height="1.1"/><rect x="307.5" y="530.28" width="1.5" height="1"/><rect x="1013.34" y="262.5" width="1" height="1.5"/><rect x="1022.58" y="261.3" width="1.1" height="4.5"/><rect x="1031.81" y="262.5" width="1" height="1.5"/><rect x="307.5" y="548.74" width="1.5" height="1"/><rect x="305.5" y="557.98" width="4.5" height="1.1"/><rect x="307.5" y="567.21" width="1.5" height="1"/><rect x="1050.27" y="262.5" width="1" height="1.5"/><rect x="1059.51" y="261.3" width="1.1" height="4.5"/><rect x="1068.74" y="262.5" width="1" height="1.5"/><rect x="307.5" y="585.67" width="1.5" height="1"/><rect x="305.5" y="594.90" width="4.5" height="1.1"/><rect x="307.5" y="604.14" width="1.5" height="1"/><rect x="1087.20" y="262.5" width="1" height="1.5"/><rect x="1096.43" y="261.3" width="1.1" height="4.5"/><rect x="1105.67" y="262.5" width="1" height="1.5"/><rect x="307.5" y="622.60" width="1.5" height="1"/><rect x="305.5" y="631.84" width="4.5" height="1.1"/><rect x="307.5" y="641.07" width="1.5" height="1"/><rect x="1124.13" y="262.5" width="1" height="1.5"/><rect x="1133.37" y="261.3" width="1.1" height="4.5"/><rect x="1142.60" y="262.5" width="1" height="1.5"/><rect x="307.5" y="659.53" width="1.5" height="1"/><rect x="305.5" y="668.76" width="4.5" height="1.1"/><rect x="307.5" y="678.00" width="1.5" height="1"/><rect x="1161.06" y="262.5" width="1" height="1.5"/><rect x="1170.30" y="261.3" width="1.1" height="4.5"/><rect x="1179.53" y="262.5" width="1" height="1.5"/><rect x="307.5" y="696.46" width="1.5" height="1"/><rect x="305.5" y="705.69" width="4.5" height="1.1"/><rect x="307.5" y="714.93" width="1.5" height="1"/><rect x="1197.99" y="262.5" width="1" height="1.5"/><rect x="1207.22" y="261.3" width="1.1" height="4.5"/><rect x="1216.46" y="262.5" width="1" height="1.5"/><rect x="307.5" y="733.39" width="1.5" height="1"/><rect x="305.5" y="742.62" width="4.5" height="1.1"/><rect x="307.5" y="751.86" width="1.5" height="1"/><rect x="1234.92" y="262.5" width="1" height="1.5"/><rect x="1244.15" y="261.3" width="1.1" height="4.5"/><rect x="1253.39" y="262.5" width="1" height="1.5"/><rect x="307.5" y="770.32" width="1.5" height="1"/><rect x="305.5" y="779.55" width="4.5" height="1.1"/><rect x="307.5" y="788.79" width="1.5" height="1"/><rect x="1271.85" y="262.5" width="1" height="1.5"/><rect x="1281.09" y="261.3" width="1.1" height="4.5"/><rect x="1290.32" y="262.5" width="1" height="1.5"/><rect x="307.5" y="807.25" width="1.5" height="1"/><rect x="305.5" y="816.49" width="4.5" height="1.1"/><rect x="307.5" y="825.72" width="1.5" height="1"/><rect x="1308.78" y="262.5" width="1" height="1.5"/><rect x="1318.02" y="261.3" width="1.1" height="4.5"/><rect x="1327.25" y="262.5" width="1" height="1.5"/><rect x="307.5" y="844.18" width="1.5" height="1"/><rect x="305.5" y="853.41" width="4.5" height="1.1"/><rect x="307.5" y="862.65" width="1.5" height="1"/><rect x="1345.71" y="262.5" width="1" height="1.5"/><rect x="1354.94" y="261.3" width="1.1" height="4.5"/><rect x="1364.18" y="262.5" width="1" height="1.5"/><rect x="307.5" y="881.11" width="1.5" height="1"/><rect x="305.5" y="890.34" width="4.5" height="1.1"/><rect x="307.5" y="899.58" width="1.5" height="1"/><rect x="1382.64" y="262.5" width="1" height="1.5"/><rect x="1391.88" y="261.3" width="1.1" height="4.5"/><rect x="1401.11" y="262.5" width="1" height="1.5"/><rect x="307.5" y="918.04" width="1.5" height="1"/><rect x="305.5" y="927.27" width="4.5" height="1.1"/><rect x="307.5" y="936.51" width="1.5" height="1"/><rect x="1419.57" y="262.5" width="1" height="1.5"/><rect x="1428.81" y="261.3" width="1.1" height="4.5"/><rect x="1438.04" y="262.5" width="1" height="1.5"/><rect x="307.5" y="954.97" width="1.5" height="1"/><rect x="305.5" y="964.21" width="4.5" height="1.1"/><rect x="307.5" y="973.44" width="1.5" height="1"/><rect x="1456.50" y="262.5" width="1" height="1.5"/><rect x="1465.73" y="261.3" width="1.1" height="4.5"/><rect x="1474.97" y="262.5" width="1" height="1.5"/><rect x="307.5" y="991.90" width="1.5" height="1"/><rect x="305.5" y="1001.13" width="4.5" height="1.1"/><rect x="1493.43" y="262.5" width="1" height="1.5"/><rect x="1502.66" y="261.3" width="1.1" height="4.5"/><rect x="1511.90" y="262.5" width="1" height="1.5"/><rect x="1530.36" y="262.5" width="1" height="1.5"/><rect x="1539.60" y="261.3" width="1.1" height="4.5"/><rect x="1548.83" y="262.5" width="1" height="1.5"/><rect x="1567.29" y="262.5" width="1" height="1.5"/><rect x="1576.52" y="261.3" width="1.1" height="4.5"/><rect x="1585.76" y="262.5" width="1" height="1.5"/><rect x="1604.22" y="262.5" width="1" height="1.5"/><rect x="1613.45" y="261.3" width="1.1" height="4.5"/><rect x="1622.69" y="262.5" width="1" height="1.5"/><rect x="1641.15" y="262.5" width="1" height="1.5"/><rect x="1650.38" y="261.3" width="1.1" height="4.5"/><rect x="1659.62" y="262.5" width="1" height="1.5"/><rect x="1678.08" y="262.5" width="1" height="1.5"/><rect x="1687.32" y="261.3" width="1.1" height="4.5"/><rect x="1696.55" y="262.5" width="1" height="1.5"/><rect x="1715.01" y="262.5" width="1" height="1.5"/><rect x="1724.25" y="261.3" width="1.1" height="4.5"/><rect x="1733.48" y="262.5" width="1" height="1.5"/></g></svg>
<div class="a" style="left:1904px;top:251px;width:15px;height:714px;background:#dcdadc"></div>
<div class="a" style="left:1904px;top:251px;width:15px;height:15px;background:#fff;border:1px solid #a8a8a8"></div>
<div class="a" style="left:1904px;top:267px;width:15px;height:68px;background:#fff;border:1px solid #a8a8a8"></div>
<div class="a" style="left:1904px;top:951px;width:15px;height:15px;background:#fff;border:1px solid #a8a8a8"></div>
<svg class="a" style="left:1904px;top:251px" width="15" height="760" viewBox="0 0 15 760">
 <path d="M3.5 10 l4 -4.5 l4 4.5 z" fill="#666"/>
 <path d="M3.5 706 l4 4.5 l4 -4.5 z" fill="#666"/>
 <path d="M3.5 724 l4 -4.5 l4 4.5 z M3.5 729 l4 -4.5 l4 4.5 z M3.5 738 l4 4.5 l4 -4.5 z M3.5 743 l4 4.5 l4 -4.5 z" fill="#777"/>
 <path d="M3.5 724.5 h8 M3.5 742.5 h8" stroke="#777" stroke-width="1"/>
</svg>
<div class="a" style="left:291px;top:1022px;width:1629px;height:1px;background:#c8c8c8"></div>

<div class="a" style="left:489px;top:298px;width:1253px;height:706px;background:radial-gradient(ellipse 4000px 2400px at -300px -1200px,#1eb5b5 50.6%,#1da9aa 57.8%,#1e9daa 61%,#1a8a9e 65.2%,#177594 68.9%,#166492 72.5%,#16598e 74.9%,#134f8a 78.8%,#123a81 81.2%,#12317a 83.6%,#11307a 87.3%)"></div>
<svg class="a" style="left:489px;top:298px;overflow:hidden" width="1253" height="706" viewBox="489 298 1253 706"><g fill="none" stroke="#ffffff" opacity="0.3"><circle cx="581" cy="485" r="227" stroke-width="1.6"/><circle cx="581" cy="485" r="272" stroke-width="1.6"/><circle cx="581" cy="485" r="81" stroke-width="1.2"/><path d="M518.4 471.7 A64.0 64.0 0 0 1 645.0 487.2" stroke-width="4" opacity="0.8"/><path d="M602.9 545.1 A64.0 64.0 0 0 1 539.9 534.0" stroke-width="4" opacity="0.8"/><circle cx="581" cy="485" r="132" stroke-width="2" stroke-dasharray="1.5 5"/><path d="M684.5 305.7 L691.5 293.6 M691.8 304.2 L696.5 296.6 M693.7 311.4 L701.4 299.7 M701.1 310.3 L706.2 302.9 M702.7 317.5 L710.9 306.2 M710.1 316.8 L715.5 309.7 M711.3 324.1 L720.1 313.3 M718.7 323.8 L724.5 317.0 M719.5 331.2 L728.9 320.8 M726.9 331.2 L733.1 324.7 M727.4 338.6 L737.3 328.7 M734.8 339.1 L741.3 332.9 M734.8 346.5 L745.2 337.1 M742.2 347.3 L749.0 341.5 M741.9 354.7 L752.7 345.9 M749.2 355.9 L756.3 350.5 M748.5 363.3 L759.8 355.1 M755.7 364.9 L763.1 359.8 M754.6 372.3 L766.3 364.6 M761.8 374.2 L769.4 369.5 M760.3 381.5 L772.4 374.5 M767.3 383.8 L775.2 379.5 M765.4 391.0 L777.9 384.7 M772.3 393.7 L780.5 389.9 M770.1 400.8 L782.9 395.1 M776.9 403.9 L785.2 400.4 M774.3 410.8 L787.3 405.8 M780.8 414.2 L789.3 411.2 M777.9 421.0 L791.2 416.7 M784.3 424.8 L792.9 422.2 M780.9 431.4 L794.5 427.8 M787.1 435.5 L795.9 433.4 M783.5 442.0 L797.2 439.1 M789.5 446.4 L798.3 444.7 M785.5 452.6 L799.3 450.4 M791.2 457.3 L800.1 456.2 M786.9 463.4 L800.8 461.9 M792.3 468.4 L801.3 467.7 M787.7 474.2 L801.7 473.4 M792.9 479.5 L801.9 479.2 M788.0 485.0 L802.0 485.0 M792.9 490.5 L801.9 490.8 M787.7 495.8 L801.7 496.6 M792.3 501.6 L801.3 502.3 M786.9 506.6 L800.8 508.1 M791.2 512.7 L800.1 513.8 M785.5 517.4 L799.3 519.6 M789.5 523.6 L798.3 525.3 M783.5 528.0 L797.2 530.9 M787.1 534.5 L795.9 536.6 M780.9 538.6 L794.5 542.2 M784.3 545.2 L792.9 547.8 M777.9 549.0 L791.2 553.3 M780.8 555.8 L789.3 558.8 M774.3 559.2 L787.3 564.2 M776.9 566.1 L785.2 569.6 M770.1 569.2 L782.9 574.9 M772.3 576.3 L780.5 580.1 M765.4 579.0 L777.9 585.3 M767.3 586.2 L775.2 590.5 M760.3 588.5 L772.4 595.5 M761.8 595.8 L769.4 600.5 M754.6 597.7 L766.3 605.4 M755.7 605.1 L763.1 610.2 M748.5 606.7 L759.8 614.9 M749.2 614.1 L756.3 619.5 M741.9 615.3 L752.7 624.1 M742.2 622.7 L749.0 628.5 M734.8 623.5 L745.2 632.9 M734.8 630.9 L741.3 637.1 M727.4 631.4 L737.3 641.3 M726.9 638.8 L733.1 645.3 M719.5 638.8 L728.9 649.2 M718.7 646.2 L724.5 653.0 M711.3 645.9 L720.1 656.7 M710.1 653.2 L715.5 660.3 M702.7 652.5 L710.9 663.8 M701.1 659.7 L706.2 667.1 M693.7 658.6 L701.4 670.3 M691.8 665.8 L696.5 673.4 M684.5 664.3 L691.5 676.4 M682.2 671.3 L686.5 679.2 M675.0 669.4 L681.3 681.9 M672.3 676.3 L676.1 684.5 M665.2 674.1 L670.9 686.9 M662.1 680.9 L665.6 689.2 M655.2 678.3 L660.2 691.3 M651.8 684.8 L654.8 693.3 M645.0 681.9 L649.3 695.2 M641.2 688.3 L643.8 696.9 M634.6 684.9 L638.2 698.5 M630.5 691.1 L632.6 699.9 M624.0 687.5 L626.9 701.2 M619.6 693.5 L621.3 702.3 M613.4 689.5 L615.6 703.3 M608.7 695.2 L609.8 704.1 M602.6 690.9 L604.1 704.8 M597.6 696.3 L598.3 705.3 M591.8 691.7 L592.6 705.7 M586.5 696.9 L586.8 705.9 M581.0 692.0 L581.0 706.0 M575.5 696.9 L575.2 705.9 M570.2 691.7 L569.4 705.7 M564.4 696.3 L563.7 705.3 M559.4 690.9 L557.9 704.8 M553.3 695.2 L552.2 704.1 M548.6 689.5 L546.4 703.3 M542.4 693.5 L540.7 702.3 M538.0 687.5 L535.1 701.2 M531.5 691.1 L529.4 699.9 M527.4 684.9 L523.8 698.5 M520.8 688.3 L518.2 696.9 M517.0 681.9 L512.7 695.2 M510.2 684.8 L507.2 693.3 M506.8 678.3 L501.8 691.3 M499.9 680.9 L496.4 689.2 M496.8 674.1 L491.1 686.9 M489.7 676.3 L485.9 684.5 M487.0 669.4 L480.7 681.9 M479.8 671.3 L475.5 679.2 M720.5 243.4 L728.5 229.5 M727.2 247.4 L732.4 238.9 M733.8 251.5 L742.5 238.2 M740.2 255.9 L745.9 247.7 M746.6 260.4 L756.1 247.6 M752.8 265.1 L758.9 257.3 M758.8 270.0 L769.0 257.7 M764.8 275.1 L771.4 267.6 M770.6 280.3 L781.4 268.5 M776.2 285.7 L783.2 278.5 M781.7 291.2 L793.2 280.1 M787.0 296.9 L794.4 290.1 M792.2 302.7 L804.3 292.2 M797.2 308.7 L805.0 302.3 M802.0 314.8 L814.7 305.0 M806.7 321.0 L814.8 315.1 M811.2 327.4 L824.4 318.3 M815.5 333.9 L823.9 328.4 M819.6 340.5 L833.3 332.2 M823.6 347.2 L832.3 342.3 M827.3 354.0 L841.5 346.5 M830.9 360.9 L839.9 356.5 M834.3 368.0 L848.8 361.3 M837.4 375.1 L846.6 371.2 M840.4 382.3 L855.3 376.4 M843.2 389.6 L852.6 386.2 M845.7 396.9 L860.9 391.9 M848.1 404.4 L857.7 401.5 M850.2 411.8 L865.7 407.7 M852.2 419.4 L861.9 417.0 M853.9 427.0 L869.6 423.7 M855.4 434.6 L865.3 432.8 M856.7 442.3 L872.5 439.9 M857.8 450.0 L867.7 448.8 M858.7 457.8 L874.6 456.2 M859.3 465.5 L869.3 464.8 M859.8 473.3 L875.7 472.6 M860.0 481.1 L870.0 481.0 M860.0 488.9 L876.0 489.1 M859.8 496.7 L869.7 497.1 M859.3 504.5 L875.3 505.6 M858.7 512.2 L868.6 513.2 M857.8 520.0 L873.7 522.0 M856.7 527.7 L866.6 529.2 M855.4 535.4 L871.2 538.3 M853.9 543.0 L863.7 545.1 M852.2 550.6 L867.7 554.4 M850.2 558.2 L859.9 560.8 M848.1 565.6 L863.4 570.3 M845.7 573.1 L855.2 576.2 M843.2 580.4 L858.2 585.9 M840.4 587.7 L849.7 591.4 M837.4 594.9 L852.1 601.2 M834.3 602.0 L843.3 606.2 M830.9 609.1 L845.2 616.2 M827.3 616.0 L836.2 620.7 M823.6 622.8 L837.5 630.7 M819.6 629.5 L828.2 634.7 M815.5 636.1 L829.0 644.8 M811.2 642.6 L819.5 648.3 M806.7 649.0 L819.7 658.4 M802.0 655.2 L810.0 661.3 M797.2 661.3 L809.6 671.4 M792.2 667.3 L799.8 673.8 M787.0 673.1 L798.8 683.9 M781.7 678.8 L788.9 685.8 M776.2 684.3 L787.4 695.8 M770.6 689.7 L777.4 697.0 M764.8 694.9 L775.3 707.0 M758.8 700.0 L765.2 707.7 M752.8 704.9 L762.6 717.5 M746.6 709.6 L752.5 717.6 M740.2 714.1 L749.4 727.2 M733.8 718.5 L739.2 726.8 M727.2 722.6 L735.6 736.3 M720.5 726.6 L725.5 735.3 M713.7 730.4 L721.3 744.5 M706.8 734.0 L711.3 743.0 M699.8 737.4 L706.6 751.9 M692.7 740.7 L696.7 749.8 M685.5 743.7 L691.5 758.5 M678.3 746.5 L681.7 755.9 M670.9 749.1 L676.1 764.3 M663.5 751.5 L666.5 761.1 M656.0 753.7 L660.3 769.1 M648.5 755.7 L650.9 765.4 M640.9 757.5 L644.3 773.1 M633.3 759.1 L635.2 768.9 M625.6 760.4 L628.2 776.2 M617.9 761.5 L619.2 771.5 M610.2 762.5 L611.8 778.4 M602.4 763.2 L603.2 773.1 M594.6 763.7 L595.4 779.6 M586.8 763.9 L587.1 773.9 M579.1 764.0 L578.9 780.0 M571.3 763.8 L570.9 773.8 M563.5 763.4 L562.5 779.4 M555.7 762.9 L554.8 772.8 M548.0 762.0 L546.1 777.9 M540.2 761.0 L538.8 770.9 M532.6 759.8 L529.8 775.5 M524.9 758.3 L522.9 768.1 M517.3 756.6 L513.6 772.2 M509.7 754.7 L507.2 764.4 M502.2 752.6 L497.7 768.0 M494.8 750.3 L491.7 759.9 M487.4 747.8 L482.0 762.9 M480.1 745.1 L476.5 754.4 M472.9 742.2 L466.7 756.9 M465.7 739.1 L461.6 748.2" stroke-width="1.1" opacity="0.55"/><path d="M1054.0 417.4 A34.0 34.0 0 1 1 1057.4 378.5" stroke-width="2"/><path d="M1049.0 359.1 A42.0 42.0 0 1 1 988.5 381.1" stroke-width="1.1"/><circle cx="1231" cy="365.5" r="75" stroke-width="3" opacity="0.85"/><path d="M1321.2 398.3 A96.0 96.0 0 0 1 1147.9 413.5" stroke-width="1.2"/><path d="M1080 293 L940 385 M1124 442 L1168 484" stroke-width="1.8" stroke-dasharray="1.5 4"/><path d="M795.5 844.0 A41.0 41.0 0 1 1 826.9 898.4" stroke-width="3.5" opacity="0.8"/><circle cx="834" cy="858" r="74" stroke-width="1.3" stroke-dasharray="6 5"/><path d="M817.5 764.4 A95.0 95.0 0 0 1 881.5 940.3" stroke-width="1.5" stroke-dasharray="1.5 4"/><circle cx="572" cy="1008" r="127" stroke-width="1.3"/><path d="M478.0 973.8 A100.0 100.0 0 0 1 658.6 958.0" stroke-width="3.5" opacity="0.8"/><path d="M599.8 850.4 A160.0 160.0 0 0 1 729.6 1035.8" stroke-width="1.3" stroke-dasharray="6 5"/><path d="M489 620 C560 700 700 800 820 920" stroke-width="1.6" stroke-dasharray="1.5 4"/><path d="M595.8 293.1 A56.0 56.0 0 0 1 535.1 353.8" stroke-width="3" opacity="0.9"/><circle cx="540" cy="298" r="74" stroke-width="1.2"/></g><g fill="#fff" opacity="0.28" font-family="Liberation Mono" font-size="15"><text x="803.5" y="263.4" transform="rotate(45.1 803.5 263.4)" text-anchor="middle" dominant-baseline="middle">130</text><text x="841.6" y="309.8" transform="rotate(56.1 841.6 309.8)" text-anchor="middle" dominant-baseline="middle">140</text><text x="870.1" y="362.6" transform="rotate(67.0 870.1 362.6)" text-anchor="middle" dominant-baseline="middle">150</text><text x="888.2" y="419.8" transform="rotate(78.0 888.2 419.8)" text-anchor="middle" dominant-baseline="middle">160</text><text x="895.0" y="479.5" transform="rotate(89.0 895.0 479.5)" text-anchor="middle" dominant-baseline="middle">170</text><text x="890.3" y="539.3" transform="rotate(100.0 890.3 539.3)" text-anchor="middle" dominant-baseline="middle">180</text><text x="874.3" y="597.2" transform="rotate(110.9 874.3 597.2)" text-anchor="middle" dominant-baseline="middle">190</text><text x="847.6" y="650.9" transform="rotate(121.9 847.6 650.9)" text-anchor="middle" dominant-baseline="middle">200</text><text x="811.1" y="698.6" transform="rotate(132.9 811.1 698.6)" text-anchor="middle" dominant-baseline="middle">210</text><text x="766.3" y="738.5" transform="rotate(143.8 766.3 738.5)" text-anchor="middle" dominant-baseline="middle">220</text><text x="714.6" y="769.1" transform="rotate(154.8 714.6 769.1)" text-anchor="middle" dominant-baseline="middle">230</text><text x="658.1" y="789.4" transform="rotate(165.8 658.1 789.4)" text-anchor="middle" dominant-baseline="middle">240</text><text x="598.8" y="798.5" transform="rotate(176.8 598.8 798.5)" text-anchor="middle" dominant-baseline="middle">250</text><text x="538.8" y="796.2" transform="rotate(187.7 538.8 796.2)" text-anchor="middle" dominant-baseline="middle">260</text><text x="480.4" y="782.4" transform="rotate(198.7 480.4 782.4)" text-anchor="middle" dominant-baseline="middle">270</text></g><g opacity="0.3"><path d="M760 625 l16 5 l-14 8 z M1116 432 l16 8 l-12 4 z M984 405 l-5 5 l6 2 z M1205 460 l6 8 l6 -8 M748 810 l16 -4 l-6 14 z M632 538 l14 8 l-14 6 z M699 868 l12 5 l-12 6 z M616 410 l6 -6 l5 7 M606 330 l8 4 l-8 4" fill="#fff" stroke="none" opacity="0.5"/></g></svg>
<div class="t" style="left:575.50px;top:469px;font-size:70.93px;color:#fff;transform:scaleX(0.9118);text-shadow:2px 2px 3px rgba(0,0,0,0.35);-webkit-text-stroke:1px #fff">ВИКОРИСТАННЯ МАТЕМАТИЧНИХ</div>
<div class="t" style="left:750.43px;top:562px;font-size:70.93px;color:#fff;transform:scaleX(0.9226);text-shadow:2px 2px 3px rgba(0,0,0,0.35);-webkit-text-stroke:1px #fff">МЕТОДІВ І МОДЕЛЕЙ В</div>
<div class="t" style="left:579.76px;top:654px;font-size:70.93px;color:#fff;transform:scaleX(0.9008);text-shadow:2px 2px 3px rgba(0,0,0,0.35);-webkit-text-stroke:1px #fff">ЕКОНОМІЧНИХ ДОСЛІДЖЕННЯХ В</div>
<div class="t" style="left:801.78px;top:747px;font-size:70.93px;color:#fff;transform:scaleX(0.8896);text-shadow:2px 2px 3px rgba(0,0,0,0.35);-webkit-text-stroke:1px #fff">СУЧАСНИХ УМОВАХ</div>
<div class="t" style="left:756.55px;top:914px;font-size:32.19px;color:#fff;font-style:italic;transform:scaleX(1.0302);text-shadow:2px 2px 3px rgba(0,0,0,0.35);-webkit-text-stroke:0.4px #fff">Доповідач: д.е.н., професор Кравченко О.О.</div>
<svg class="a" style="left:1028px;top:860px" width="14" height="22" viewBox="0 0 14 22"><path d="M1 1 v16 l4 -4 l3 7 l2.5 -1 l-3 -7 h5.5 z" fill="#fff" stroke="#000" stroke-width="1"/></svg>
<div class="a" style="left:1302px;top:202px;width:422px;height:240px;background:#0b0b0b"></div>
<svg class="a" style="left:1305px;top:205px;overflow:hidden" width="416" height="234" viewBox="0 0 416 234">
<defs>
 <linearGradient id="wbg" x1="0" y1="0" x2="1" y2="0">
  <stop offset="0" stop-color="#c3cbc3"/><stop offset="0.08" stop-color="#cfd4cc"/><stop offset="0.3" stop-color="#c7c9bf"/><stop offset="0.6" stop-color="#cdc7ba"/><stop offset="1" stop-color="#cbcabd"/>
 </linearGradient>
 <linearGradient id="wbr" x1="0" y1="0" x2="1" y2="1">
  <stop offset="0" stop-color="#8a6a50"/><stop offset="0.35" stop-color="#5a3c28"/><stop offset="1" stop-color="#2a190f"/>
 </linearGradient>
 <filter id="b12" x="-50%" y="-50%" width="200%" height="200%"><feGaussianBlur stdDeviation="12"/></filter>
 <filter id="b6" x="-50%" y="-50%" width="200%" height="200%"><feGaussianBlur stdDeviation="6"/></filter>
 <filter id="b3" x="-50%" y="-50%" width="200%" height="200%"><feGaussianBlur stdDeviation="3"/></filter>
 <filter id="b2" x="-50%" y="-50%" width="200%" height="200%"><feGaussianBlur stdDeviation="1.6"/></filter>
</defs>
<rect width="416" height="234" fill="url(#wbg)"/>
<ellipse cx="125" cy="30" rx="35" ry="45" fill="#b9b1a5" filter="url(#b12)"/>
<rect x="0" y="120" width="110" height="114" fill="#d2d6cd" opacity="0.7" filter="url(#b12)"/>
<linearGradient id="wbr2" x1="0" y1="0" x2="0.5" y2="1">
  <stop offset="0" stop-color="#9a836e"/><stop offset="0.3" stop-color="#6a4a34"/><stop offset="0.7" stop-color="#4a2e1e"/><stop offset="1" stop-color="#2e1c12"/>
</linearGradient>
<path d="M250 106 C290 98 345 88 430 80 L430 250 L235 250 Z" fill="url(#wbr2)" filter="url(#b6)"/>
<path d="M330 170 L430 150 L430 250 L300 250 Z" fill="#2a1a10" opacity="0.5" filter="url(#b12)"/>
<!-- hair -->
<ellipse cx="196" cy="86" rx="67" ry="58" fill="#d2b8a2" filter="url(#b3)"/>
<ellipse cx="152" cy="124" rx="26" ry="24" fill="#cfb5a0" filter="url(#b3)"/>
<ellipse cx="251" cy="106" rx="11" ry="26" fill="#c9ab94" filter="url(#b3)"/>
<ellipse cx="246" cy="160" rx="16" ry="22" fill="#4a3226" filter="url(#b6)"/>
<!-- neck -->
<path d="M178 150 L220 150 L219 186 L180 186 Z" fill="#d4ada5" filter="url(#b2)"/>
<!-- face -->
<ellipse cx="198" cy="107" rx="48" ry="59" fill="#e6aea8" filter="url(#b2)"/>
<ellipse cx="200" cy="68" rx="38" ry="20" fill="#eec3b8" filter="url(#b6)"/>
<ellipse cx="244" cy="126" rx="6" ry="10" fill="#dba39a" filter="url(#b2)"/>
<ellipse cx="167" cy="88" rx="8" ry="4" fill="#b9b8c2" filter="url(#b2)"/>
<ellipse cx="205" cy="83" rx="8" ry="4" fill="#b9b8c2" filter="url(#b2)"/>

<ellipse cx="180" cy="113" rx="9" ry="6" fill="#d9a29a" filter="url(#b3)"/>
<ellipse cx="184" cy="132" rx="15" ry="4.5" fill="#cc868c" filter="url(#b2)"/>
<!-- sweater -->
<path d="M68 240 C80 222 100 211 130 200 C150 190 160 180 164 168 L166 154 C172 170 184 184 198 185 C216 185 234 170 244 146 C250 161 258 173 268 186 C290 206 314 222 330 240 Z" fill="#1d1819" filter="url(#b2)"/>
</svg>
<div class="a" style="left:1306px;top:414px;width:132px;height:24px;border-radius:6px;background:rgba(45,45,45,0.72)"></div>

<div class="t" style="left:1309.76px;top:419px;font-size:15.26px;color:#fff;transform:scaleX(1.0325)">Ольга Кравченко</div>
<div class="a" style="left:1463px;top:1026px;width:47px;height:30px;background:#d2d0ce"></div>
<svg class="a" style="left:0;top:1025px" width="1920" height="31" viewBox="0 1025 1920 31">
<g fill="none" stroke="#555" stroke-width="1.3">
 <path d="M119 1033 v16 h7 l3 3 l3 -3 h5 v-16 h-6 l-2 2 l-2 -2 z M128 1035 v10"/>
 <path d="M124 1045 l5 5 l9 -9" stroke-width="1.4"/>
 <path d="M1252 1036 l5 -5 l5 5 M1246 1041.5 h21 M1246 1045.5 h21 M1246 1050.5 h21"/>
 <path d="M1350.5 1031.5 h20 v14 h-13 l-4 4 v-4 h-3 z"/>
 <rect x="1476.5" y="1032.5" width="20" height="16"/>
 <path d="M1480.5 1032.5 v16 M1484.5 1036.5 h9 v5 h-9 z M1480.5 1044.5 h16"/>
 <rect x="1523.5" y="1032.5" width="8" height="6"/><rect x="1535.5" y="1032.5" width="8" height="6"/>
 <rect x="1523.5" y="1042.5" width="8" height="6"/><rect x="1535.5" y="1042.5" width="8" height="6"/>
 <path d="M1570.5 1033.5 q5 -2 9.5 1 q4.5 -3 9.5 -1 v15 q-5 -2 -9.5 1 q-4.5 -3 -9.5 -1 z M1580 1034.5 v14 M1573 1037.5 h4 M1573 1040.5 h4 M1573 1043.5 h4 M1583 1037.5 h4 M1583 1040.5 h4 M1583 1043.5 h4"/>
 <path d="M1618 1032.5 h18 M1619.5 1032.5 v9 h15 v-9 M1627 1041.5 v7 M1622 1048.5 h10 M1623 1036 h8"/>
 <path d="M1657 1040.5 h11 M1823 1040.5 h11 M1828.5 1035 v11"/>
 <path d="M1898.5 1035.5 h9 v9 h-9 z M1900 1033 l3 -3 l3 3 M1900 1047.5 l3 3 l3 -3 M1896 1037 l-3 3 l3 3 M1910 1037 l3 3 l-3 3" />
</g>
<rect x="1673" y="1040.5" width="145" height="1" fill="#9a9a9a"/>
<rect x="1741" y="1033" width="6.5" height="16" fill="#7a7a7a"/>
</svg>

<div class="t" style="left:7.67px;top:1032px;font-size:16.28px;color:#555;transform:scaleX(0.8826)">Слайд 1 з 10</div>
<div class="t" style="left:155.65px;top:1032px;font-size:16.30px;color:#555;transform:scaleX(0.9553)">українська</div>
<div class="t" style="left:1269.27px;top:1034px;font-size:16.72px;color:#555;transform:scaleX(0.9734)">Нотатки</div>
<div class="t" style="left:1373.27px;top:1034px;font-size:16.72px;color:#555;transform:scaleX(0.9845)">Примітки</div>
<div class="t" style="left:1846.84px;top:1033px;font-size:15.12px;color:#555;transform:scaleX(0.9273)">98%</div>
</body></html>
